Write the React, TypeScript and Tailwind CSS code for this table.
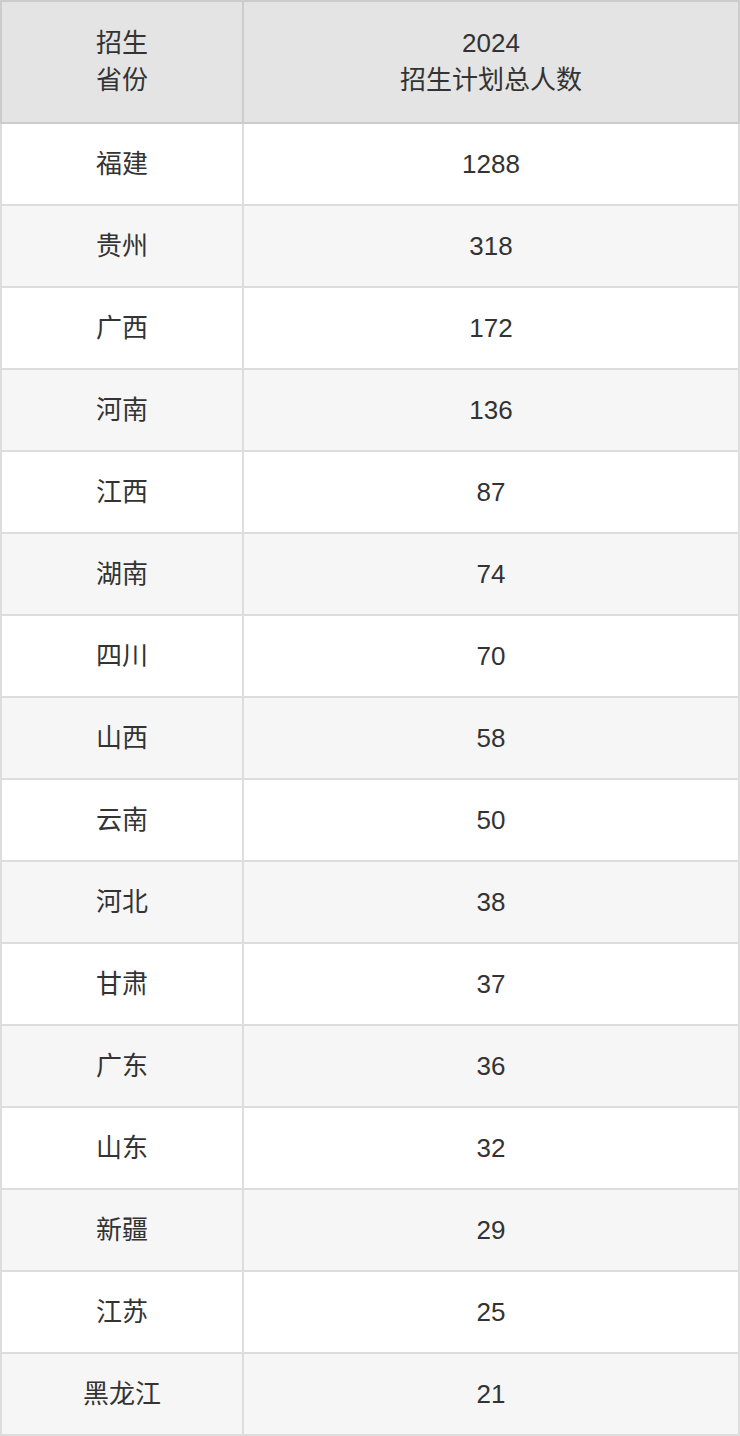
import React from "react";

const rows: [string, string][] = [
  ["福建", "1288"],
  ["贵州", "318"],
  ["广西", "172"],
  ["河南", "136"],
  ["江西", "87"],
  ["湖南", "74"],
  ["四川", "70"],
  ["山西", "58"],
  ["云南", "50"],
  ["河北", "38"],
  ["甘肃", "37"],
  ["广东", "36"],
  ["山东", "32"],
  ["新疆", "29"],
  ["江苏", "25"],
  ["黑龙江", "21"],
];

export default function App() {
  return (
    <div
      className="w-[740px] bg-white text-[#333] text-[26px]"
      style={{ fontFamily: '"Liberation Sans", "Noto Sans CJK SC", sans-serif' }}
    >
      <table className="w-[740px] border-collapse table-fixed">
        <colgroup>
          <col className="w-[242px]" />
          <col />
        </colgroup>
        <thead>
          <tr className="h-[122px] bg-[#e4e4e4]">
            <th className="border-2 border-[#cccccc] font-normal leading-[37px] text-center align-middle">
              招生
              <br />
              省份
            </th>
            <th className="border-2 border-[#cccccc] font-normal leading-[37px] text-center align-middle">
              2024
              <br />
              招生计划总人数
            </th>
          </tr>
        </thead>
        <tbody>
          {rows.map(([p, n], i) => (
            <tr key={p} className={`h-[82px] ${i % 2 === 1 ? "bg-[#f6f6f6]" : "bg-white"}`}>
              <td className="border-2 border-[#dddddd] text-center align-middle leading-[38px]">{p}</td>
              <td className="border-2 border-[#dddddd] text-center align-middle leading-[38px]">{n}</td>
            </tr>
          ))}
        </tbody>
      </table>
    </div>
  );
}
